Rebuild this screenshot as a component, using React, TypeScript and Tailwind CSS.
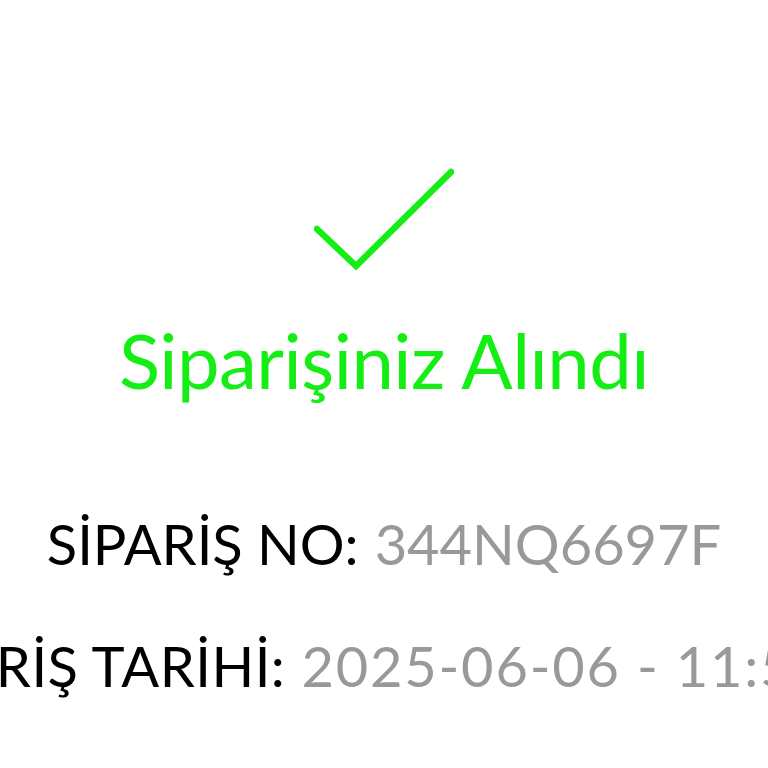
import React from "react";

export default function App() {
  return (
    <div
      className="w-[768px] h-[768px] bg-white overflow-hidden flex flex-col items-center"
      style={{ fontFamily: "Lato, 'Open Sans', sans-serif" }}
    >
      <svg width="140" height="102" viewBox="0 0 140 102" className="mt-[168px] ml-[-1px]">
        <polyline
          points="3,61 42,98 137,4"
          fill="none"
          stroke="#14ee14"
          strokeWidth="6.5"
          strokeLinecap="round"
          strokeLinejoin="miter"
        />
      </svg>
      <div className="mt-[52px] text-[76px] leading-none text-[#14ee14] whitespace-nowrap tracking-[-0.5px]">
        Siparişiniz Alındı
      </div>
      <div className="mt-[118px] w-full flex justify-center text-[56px] leading-none whitespace-nowrap">
        <span className="text-black">SİPARİŞ NO:</span>
        <span className="text-[#999999] ml-[16px]">344NQ6697F</span>
      </div>
      <div className="mt-[66px] w-full flex justify-start text-[56px] leading-none whitespace-nowrap">
        <div className="flex ml-[-121px] shrink-0">
          <span className="text-black tracking-[0.5px]">SİPARİŞ TARİHİ:</span>
          <span className="text-[#999999] ml-[16px] tracking-[1.8px]">2025-06-06 - 11:53</span>
        </div>
      </div>
    </div>
  );
}
